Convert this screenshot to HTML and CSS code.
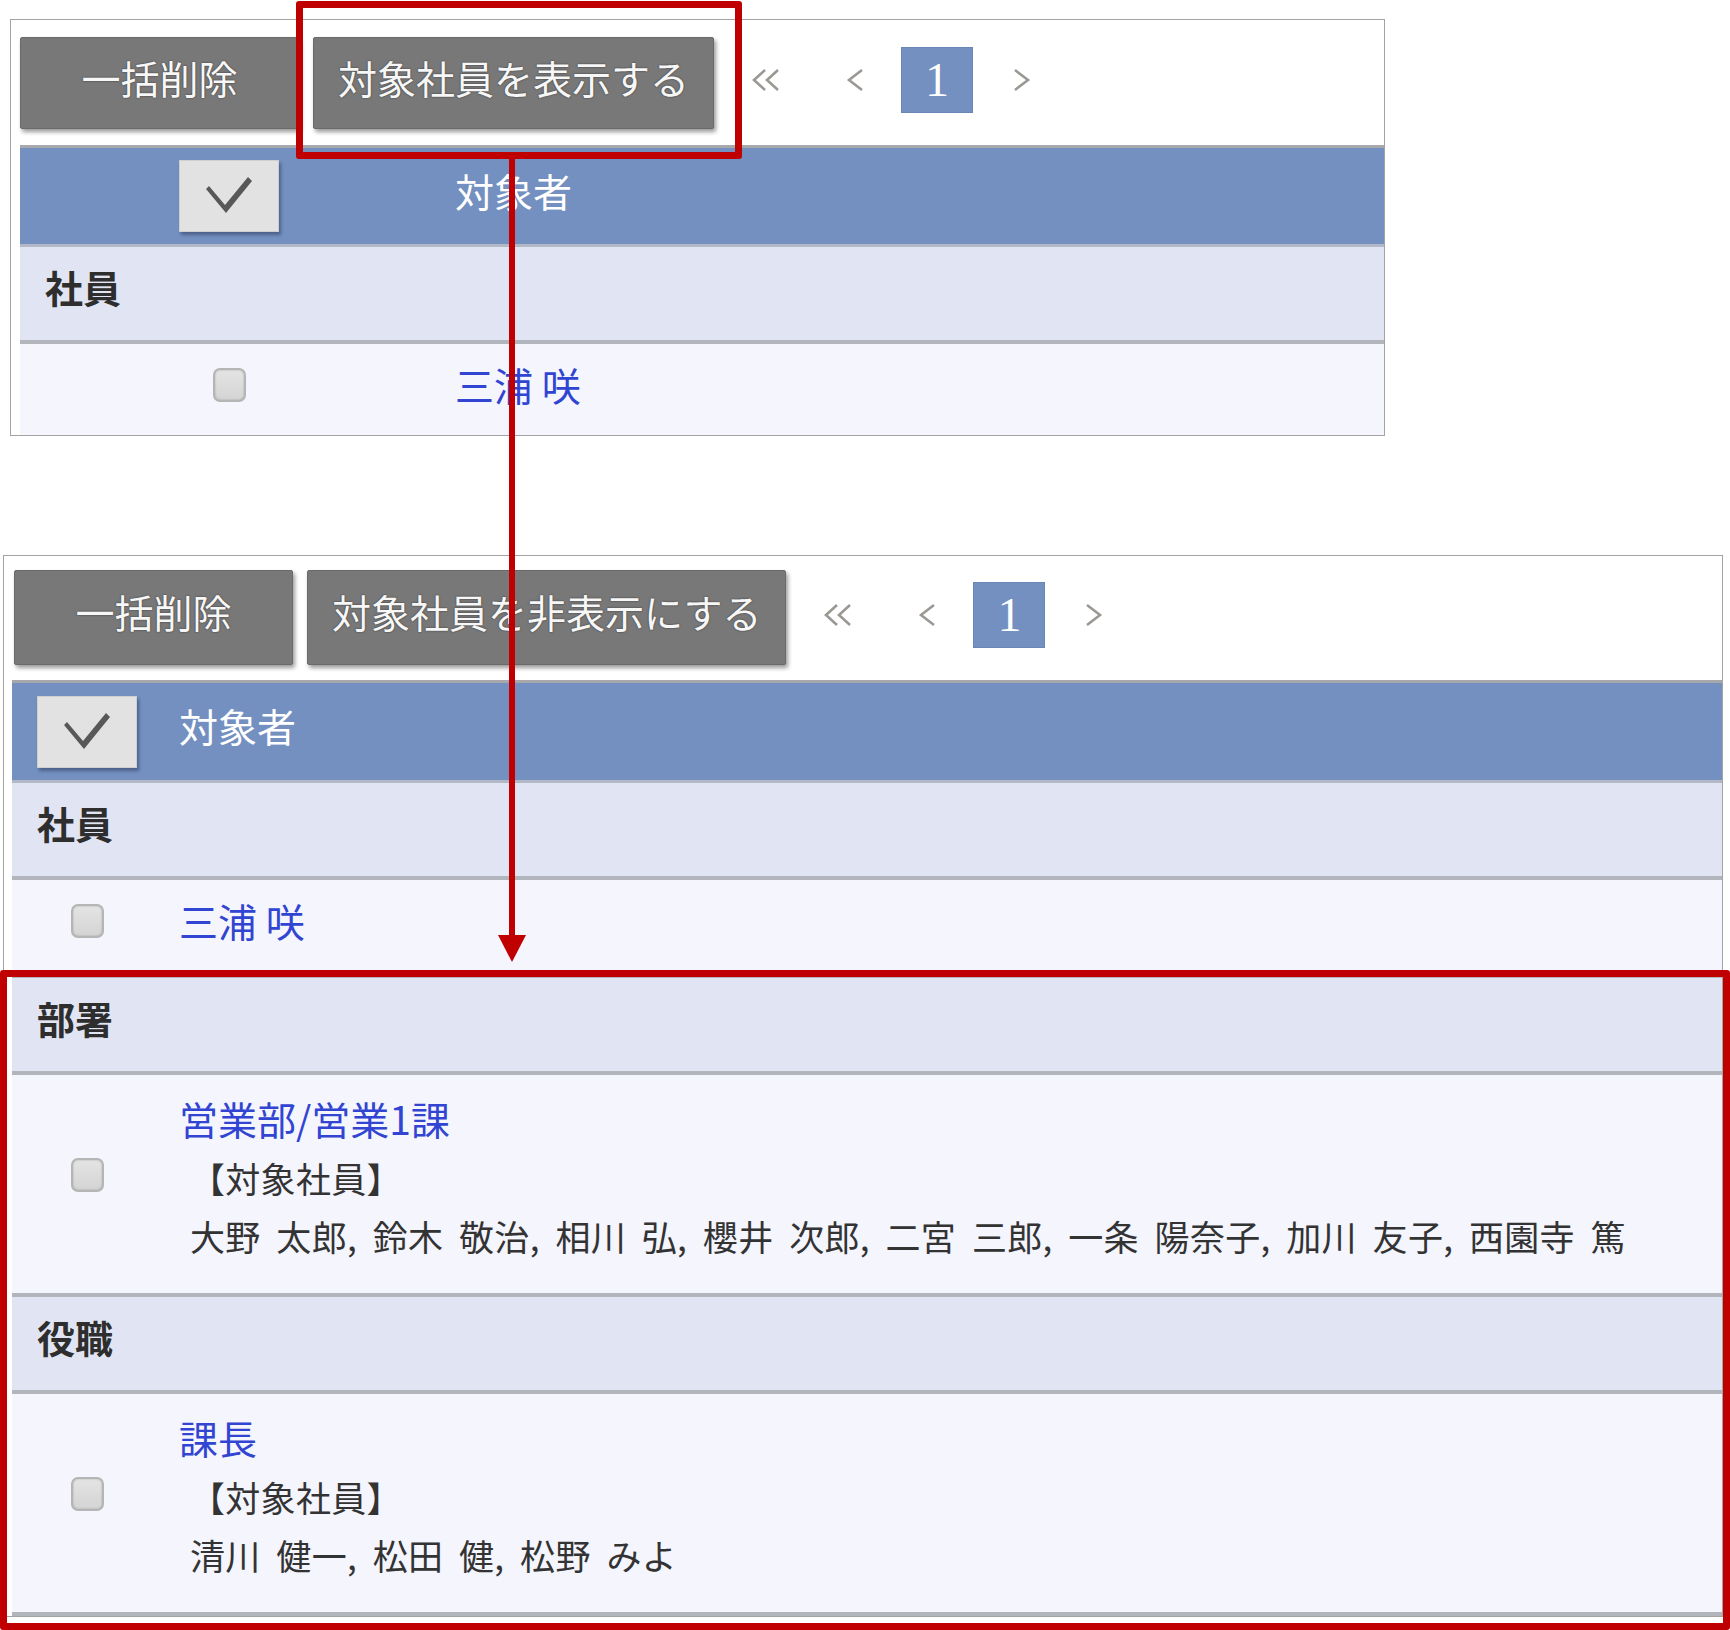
FILE: index.html
```html
<!DOCTYPE html>
<html lang="ja">
<head>
<meta charset="utf-8">
<title>対象者</title>
<link rel="stylesheet" href="styles.css">
</head>
<body>
<div class="canvas">

  <section class="panel panel-a">
    <div class="toolbar">
      <button class="btn btn-del">一括削除</button>
      <button class="btn">対象社員を表示する</button>
      <nav class="pager">
        <span class="pg"><svg width="32" height="24" viewBox="0 0 32 24"><polyline points="15,2 4,12 15,22" /><polyline points="28,2 17,12 28,22" /></svg></span>
        <span class="pg pg-prev"><svg width="20" height="24" viewBox="0 0 20 24"><polyline points="17,2 4,12 17,22" /></svg></span>
        <span class="pg pg-cur">1</span>
        <span class="pg pg-next"><svg width="20" height="24" viewBox="0 0 20 24"><polyline points="3,2 16,12 3,22" /></svg></span>
      </nav>
    </div>
    <div class="table">
      <div class="row head">
        <div class="c1"><span class="checkall"><svg width="100" height="72" viewBox="0 0 100 72"><path d="M27,29 L30,26 L46,45 L69,17 L73,21 L47,53 Z" /></svg></span></div>
        <div class="c2">対象者</div>
      </div>
      <div class="row section"><span class="sec-label">社員</span></div>
      <div class="row item">
        <div class="c1"><span class="cb"></span></div>
        <div class="c2"><a class="link">三浦 咲</a></div>
      </div>
    </div>
  </section>

  <section class="panel panel-b">
    <div class="toolbar">
      <button class="btn btn-del">一括削除</button>
      <button class="btn">対象社員を非表示にする</button>
      <nav class="pager">
        <span class="pg"><svg width="32" height="24" viewBox="0 0 32 24"><polyline points="15,2 4,12 15,22" /><polyline points="28,2 17,12 28,22" /></svg></span>
        <span class="pg pg-prev"><svg width="20" height="24" viewBox="0 0 20 24"><polyline points="17,2 4,12 17,22" /></svg></span>
        <span class="pg pg-cur">1</span>
        <span class="pg pg-next"><svg width="20" height="24" viewBox="0 0 20 24"><polyline points="3,2 16,12 3,22" /></svg></span>
      </nav>
    </div>
    <div class="table">
      <div class="row head">
        <div class="c1"><span class="checkall"><svg width="100" height="72" viewBox="0 0 100 72"><path d="M27,29 L30,26 L46,45 L69,17 L73,21 L47,53 Z" /></svg></span></div>
        <div class="c2">対象者</div>
      </div>
      <div class="row section"><span class="sec-label">社員</span></div>
      <div class="row item">
        <div class="c1"><span class="cb"></span></div>
        <div class="c2"><a class="link">三浦 咲</a></div>
      </div>
      <div class="row section"><span class="sec-label">部署</span></div>
      <div class="row detail">
        <div class="c1"><span class="cb"></span></div>
        <div class="c2">
          <a class="link">営業部/営業1課</a>
          <div class="members">
            <div>【対象社員】</div>
            <div>大野 太郎, 鈴木 敬治, 相川 弘, 櫻井 次郎, 二宮 三郎, 一条 陽奈子, 加川 友子, 西園寺 篤</div>
          </div>
        </div>
      </div>
      <div class="row section"><span class="sec-label">役職</span></div>
      <div class="row detail">
        <div class="c1"><span class="cb"></span></div>
        <div class="c2">
          <a class="link">課長</a>
          <div class="members">
            <div>【対象社員】</div>
            <div>清川 健一, 松田 健, 松野 みよ</div>
          </div>
        </div>
      </div>
    </div>
  </section>

  <div class="mark mark-btn"></div>
  <div class="arrow-line"></div>
  <div class="arrow-head"></div>
  <div class="mark mark-rows"></div>
</div>
</body>
</html>
```

FILE: styles.css
```css
* { box-sizing: border-box; }

html, body {
  margin: 0;
  padding: 0;
  background: #ffffff;
}

body {
  font-family: "Noto Sans CJK JP", "Noto Sans", sans-serif;
  color: #333333;
}

.canvas {
  position: relative;
  width: 1730px;
  height: 1630px;
  overflow: hidden;
  padding-top: 19px;
}

/* ---------- panels ---------- */
.panel {
  border: 1px solid #a3a3a3;
  background: #ffffff;
  overflow: hidden;
}

.panel-a {
  margin-left: 10px;
  width: 1375px;
  height: 417px;
  padding-left: 9px;
}

.panel-b {
  margin-left: 3px;
  margin-top: 119px;
  width: 1720px;
  padding-left: 8px;
}

/* ---------- toolbar ---------- */
.toolbar {
  display: flex;
  align-items: center;
  gap: 14px;
}

.panel-a .toolbar { padding: 17px 0 16px 0; }
.panel-b .toolbar { padding: 14px 0 15px 2px; }

.btn {
  font-family: inherit;
  font-size: 39px;
  line-height: 1;
  color: #f7f7f7;
  text-shadow: 0 0 2px rgba(0, 0, 0, 0.6);
  background: #787878;
  border: 1px solid #6a6a6a;
  border-radius: 2px;
  box-shadow: 2px 3px 4px rgba(0, 0, 0, 0.4);
  padding: 0 24px 12px 24px;
  cursor: pointer;
}

.panel-a .btn { height: 92px; }
.panel-b .btn { height: 95px; }

.btn-del { min-width: 279px; }

.pager {
  display: flex;
  align-items: center;
  margin-left: 2px;
  margin-top: -6px;
}

.pg {
  width: 72px;
  display: flex;
  align-items: center;
  justify-content: center;
}

.pg svg polyline {
  fill: none;
  stroke: #9b9894;
  stroke-width: 2.6;
}

.pg-prev { margin-left: 17px; }
.pg-cur { margin-left: 10px; }
.pg-next { margin-left: 13px; }

.pg-cur {
  height: 66px;
  background: #7390c0;
  border: 1px solid #6a86b6;
  color: #ffffff;
  font-family: "Liberation Serif", "Times New Roman", serif;
  font-size: 48px;
  line-height: 1;
}

/* ---------- table ---------- */
.table {
  display: flex;
  flex-direction: column;
}

.row {
  display: grid;
  align-items: center;
}

.panel-a .row { grid-template-columns: 418px 1fr; }
.panel-b .row { grid-template-columns: 150px 1fr; }

.head {
  background: #7390c0;
  border-top: 3px solid #a6a8ac;
  border-bottom: 3px solid #b3b8c6;
  color: #ffffff;
  font-size: 39px;
}

.panel-a .head { height: 102px; }
.panel-b .head { height: 103px; }

.head .c2 {
  padding-left: 17px;
  padding-bottom: 12px;
  line-height: 1;
}

.c1 {
  display: flex;
  justify-content: center;
  align-items: center;
}

.checkall {
  width: 100px;
  height: 72px;
  background: #e2e2e2;
  border: 1px solid #cfcfcf;
  box-shadow: 2px 3px 3px rgba(30, 40, 70, 0.45);
  display: block;
}

.checkall svg { display: block; margin: -1px; }

.checkall path {
  fill: #585858;
}

.section {
  display: flex;
  align-items: center;
  height: 97px;
  background: #e1e5f3;
  border-bottom: 4px solid #b3b5bc;
  padding-left: 25px;
  padding-bottom: 14px;
}

.sec-label {
  font-size: 38px;
  font-weight: 700;
  color: #2e2e2e;
  line-height: 1;
}

.item {
  height: 98px;
  background: #f4f5fd;
  border-bottom: 4px solid #b3b5bc;
}

.item .c1 .cb { margin-bottom: 12px; }

.item .c2 { padding-bottom: 12px; }

.detail {
  height: 222px;
  background: #f4f5fd;
  border-bottom: 4px solid #b3b5bc;
  align-items: start;
}

.detail .c1 {
  height: 218px;
  padding-bottom: 18px;
}

.c2 { padding-left: 17px; }

.detail .c2 {
  padding-top: 14px;
  line-height: 58px;
}

.link {
  color: #3144d2;
  font-size: 39px;
  line-height: 1;
  text-decoration: none;
}

.detail .link {
  display: block;
  line-height: 58px;
}

.members {
  font-size: 35px;
  color: #333333;
  padding-left: 11px;
  padding-top: 2px;
  word-spacing: 7.6px;
  letter-spacing: 0.3px;
  white-space: nowrap;
}

.cb {
  width: 33px;
  height: 34px;
  border-radius: 7px;
  border: 2px solid #b5b5b5;
  background: linear-gradient(#e4e4e4, #d4d4d4);
  box-shadow: inset 0 0 2px rgba(0, 0, 0, 0.25);
  display: block;
}

/* ---------- annotations ---------- */
.mark {
  position: absolute;
  border: 7px solid #c00000;
  border-radius: 3px;
  pointer-events: none;
}

.mark-btn {
  left: 296px;
  top: 1px;
  width: 446px;
  height: 158px;
}

.mark-rows {
  left: 0;
  top: 970px;
  width: 1730px;
  height: 660px;
}

.arrow-line {
  position: absolute;
  left: 509px;
  top: 158px;
  width: 6px;
  height: 780px;
  background: #c00000;
}

.arrow-head {
  position: absolute;
  left: 498px;
  top: 935px;
  width: 0;
  height: 0;
  border-left: 14px solid transparent;
  border-right: 14px solid transparent;
  border-top: 27px solid #c00000;
}
```
